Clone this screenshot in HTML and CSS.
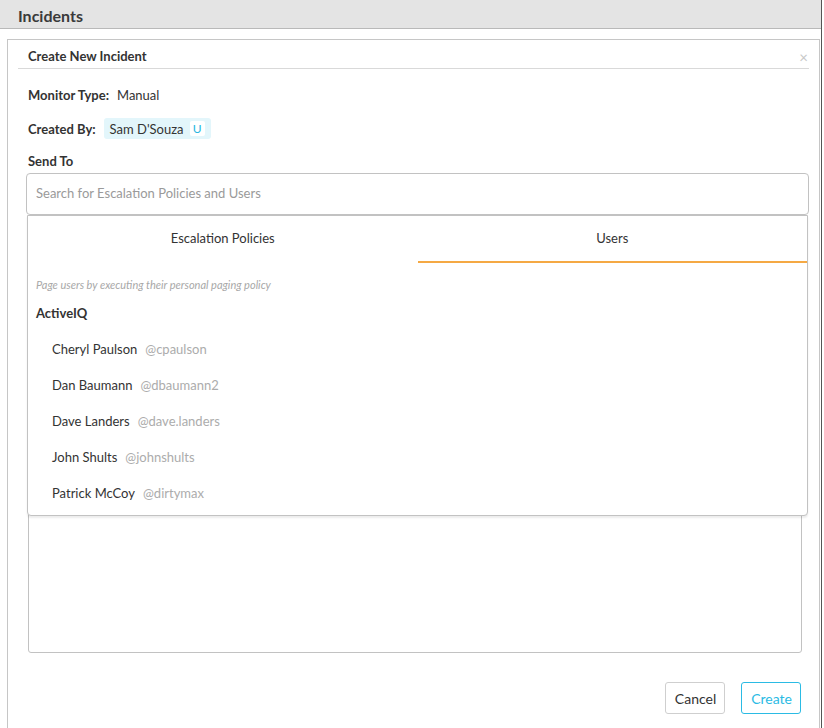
FILE: index.html
```html
<!DOCTYPE html>
<html lang="en">
<head>
    <meta charset="UTF-8">
    <title>Incidents</title>
    <link rel="stylesheet" href="styles.css">
</head>
<body>
<div class="page">
    <div class="topbar">Incidents</div>

    <div class="modal">
        <div class="modal-head">
            <span class="modal-title">Create New Incident</span>
            <span class="close">&times;</span>
        </div>

        <div class="modal-body">
            <div class="field-row">
                <span class="label">Monitor Type:</span>
                <span class="value">Manual</span>
            </div>
            <div class="field-row created">
                <span class="label">Created By:</span>
                <span class="chip">Sam D'Souza <span class="chip-tag">U</span></span>
            </div>
            <div class="field-row send">
                <span class="label">Send To</span>
            </div>

            <div class="search-wrap">
                <input class="search" type="text" placeholder="Search for Escalation Policies and Users">

                <!-- dropdown opened under the search box -->
                <div class="dropdown">
                    <div class="tabs">
                        <div class="tab">Escalation Policies</div>
                        <div class="tab active">Users</div>
                    </div>
                    <div class="hint">Page users by executing their personal paging policy</div>
                    <div class="group">ActiveIQ</div>
                    <ul class="user-list">
                        <li><span class="name">Cheryl Paulson</span><span class="handle">@cpaulson</span></li>
                        <li><span class="name">Dan Baumann</span><span class="handle">@dbaumann2</span></li>
                        <li><span class="name">Dave Landers</span><span class="handle">@dave.landers</span></li>
                        <li><span class="name">John Shults</span><span class="handle">@johnshults</span></li>
                        <li><span class="name">Patrick McCoy</span><span class="handle">@dirtymax</span></li>
                    </ul>
                </div>
            </div>

            <div class="field-row message">
                <span class="label">Message</span>
            </div>
            <textarea class="details"></textarea>

            <div class="actions">
                <button class="btn">Cancel</button>
                <button class="btn primary">Create</button>
            </div>
        </div>
    </div>
</div>
</body>
</html>
```

FILE: styles.css
```css
body {
    margin: 0;
    background: #fff;
    font-family: Lato, "Open Sans", sans-serif;
    color: #333;
    font-size: 13px;
}
.page {
    width: 821px;
    height: 728px;
    border-right: 1px solid #555;
    overflow: hidden;
}
.topbar {
    height: 28px;
    line-height: 32px;
    background: #e4e4e4;
    border-bottom: 1px solid #b9b9b9;
    padding-left: 18px;
    font-size: 16px;
    font-weight: bold;
    color: #3a3a3a;
}
.modal {
    margin: 10px 1px 0 7px;
    border: 1px solid #c6c6c6;
    border-bottom: none;
    height: 700px;
}
.modal-head {
    margin: 0 10px;
    padding: 6px 10px 2px;
    height: 20px;
    border-bottom: 1px solid #d9d9d9;
    display: flex;
    align-items: center;
    justify-content: space-between;
}
.modal-title {
    font-weight: bold;
    color: #333;
}
.close {
    color: #c8c8c8;
    font-size: 15px;
    margin-right: -9px;
    margin-top: 1px;
}
.modal-body {
    padding: 0 10px 0 18px;
}
.field-row {
    display: flex;
    align-items: center;
    height: 20px;
    line-height: 20px;
    padding-left: 2px;
    margin-top: 16px;
}
.field-row.created {
    height: 21px;
    margin-top: 13px;
}
.field-row.send {
    margin-top: 12px;
}
.label {
    font-weight: bold;
    color: #333;
}
.value {
    margin-left: 8px;
}
.chip {
    margin-left: 8px;
    display: flex;
    align-items: center;
    height: 21px;
    padding: 0 6px 0 6px;
    background: #e3f6fb;
    border-radius: 3px;
    color: #333;
}
.chip-tag {
    display: inline-block;
    margin-left: 6px;
    width: 15px;
    height: 15px;
    line-height: 16px;
    text-align: center;
    background: #fff;
    border-radius: 2px;
    color: #27b5e0;
    font-size: 12px;
}
.search-wrap {
    position: relative;
    margin-top: 2px;
}
.search {
    display: block;
    box-sizing: border-box;
    width: 100%;
    height: 42px;
    border: 1px solid #c2c2c2;
    border-radius: 4px;
    padding: 0 9px 3px;
    font-family: inherit;
    font-size: 13px;
    color: #333;
    outline: none;
}
.search::placeholder {
    color: #9a9a9a;
}
.dropdown {
    position: absolute;
    top: 42px;
    left: 1px;
    right: 1px;
    height: 299px;
    background: #fff;
    border: 1px solid #c2c2c2;
    border-radius: 0 0 4px 4px;
    box-shadow: 0 2px 2px rgba(0, 0, 0, 0.08);
    z-index: 5;
}
.tabs {
    display: flex;
}
.tab {
    flex: 1;
    text-align: center;
    padding: 12px 0 13px;
    line-height: 20px;
    border-bottom: 2px solid transparent;
    color: #333;
}
.tab.active {
    border-bottom-color: #f5a944;
}
.hint {
    margin-top: 14px;
    padding-left: 8px;
    line-height: 16px;
    font-size: 11px;
    font-style: italic;
    color: #a8a8a8;
}
.group {
    margin-top: 10px;
    padding-left: 8px;
    line-height: 20px;
    font-weight: bold;
}
.user-list {
    list-style: none;
    margin: 8px 0 0;
    padding: 0;
}
.user-list li {
    height: 36px;
    line-height: 36px;
    padding-left: 24px;
}
.name {
    color: #333;
    margin-right: 8px;
}
.handle {
    color: #acacac;
}
.field-row.message {
    margin-top: 14px;
}
.details {
    display: block;
    box-sizing: border-box;
    width: 774px;
    height: 398px;
    margin: 6px 0 0 2px;
    border: 1px solid #c2c2c2;
    border-radius: 3px;
    resize: none;
}
.actions {
    display: flex;
    justify-content: flex-end;
    gap: 16px;
    margin-top: 29px;
    padding-right: 8px;
}
.btn {
    height: 32px;
    padding: 0 8px 0 9px;
    background: #fff;
    border: 1px solid #cfcfcf;
    border-radius: 3px;
    font-family: inherit;
    font-size: 14px;
    color: #333;
}
.btn.primary {
    border-color: #2bbbe4;
    color: #2bbbe4;
}
```
